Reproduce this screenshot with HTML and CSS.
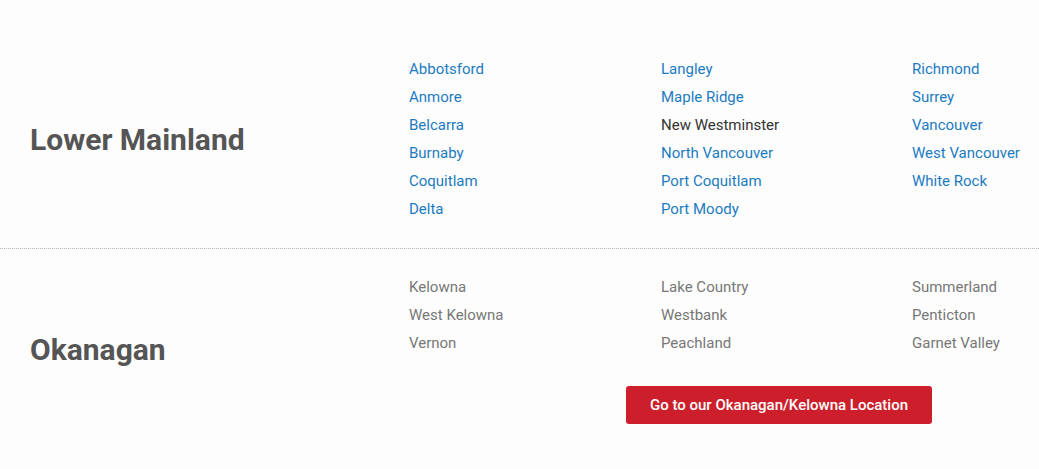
FILE: index.html
```html
<!DOCTYPE html>
<html lang="en">
<head>
<meta charset="utf-8">
<title>Service Areas</title>
<link rel="stylesheet" href="styles.css">
</head>
<body>
<div class="page">
  <section class="region region-first">
    <div class="region-title"><h2>Lower Mainland</h2></div>
    <div class="region-body">
      <ul class="cities">
        <li><a href="#">Abbotsford</a></li>
        <li><a href="#">Langley</a></li>
        <li><a href="#">Richmond</a></li>
        <li><a href="#">Anmore</a></li>
        <li><a href="#">Maple Ridge</a></li>
        <li><a href="#">Surrey</a></li>
        <li><a href="#">Belcarra</a></li>
        <li><span class="plain">New Westminster</span></li>
        <li><a href="#">Vancouver</a></li>
        <li><a href="#">Burnaby</a></li>
        <li><a href="#">North Vancouver</a></li>
        <li><a href="#">West Vancouver</a></li>
        <li><a href="#">Coquitlam</a></li>
        <li><a href="#">Port Coquitlam</a></li>
        <li><a href="#">White Rock</a></li>
        <li><a href="#">Delta</a></li>
        <li><a href="#">Port Moody</a></li>
        <li></li>
      </ul>
    </div>
  </section>
  <section class="region">
    <div class="region-title"><h2>Okanagan</h2></div>
    <div class="region-body">
      <ul class="cities muted">
        <li>Kelowna</li>
        <li>Lake Country</li>
        <li>Summerland</li>
        <li>West Kelowna</li>
        <li>Westbank</li>
        <li>Penticton</li>
        <li>Vernon</li>
        <li>Peachland</li>
        <li>Garnet Valley</li>
      </ul>
      <div class="cta-wrap"><a class="cta" href="#">Go to our Okanagan/Kelowna Location</a></div>
    </div>
  </section>
</div>
</body>
</html>
```

FILE: styles.css
```css
html, body {
  margin: 0;
  padding: 0;
  background: #fdfdfd;
}
body {
  font-family: Roboto, "Liberation Sans", Arial, sans-serif;
  color: #555;
}
.page {
  padding-top: 30px;
}
.region {
  display: flex;
  align-items: center;
  padding: 24px 0 26px;
}
.region-first {
  padding: 25px 0 25px;
  border-bottom: 1px dotted #b5b5b5;
}
.region-title {
  width: 379px;
  padding: 2px 0 0 30px;
  flex: none;
}
.region-title h2 {
  margin: 0;
  font-size: 30px;
  line-height: 36px;
  font-weight: 700;
  color: #555;
}
.region-body {
  flex: 1;
  min-width: 0;
}
.cities {
  list-style: none;
  margin: 0;
  padding: 0;
  display: grid;
  grid-template-columns: 252px 251px auto;
  font-size: 15px;
  line-height: 28px;
}
.cities a {
  color: #1b7bc2;
  text-decoration: none;
}
.cities .plain {
  color: #333;
}
.cities.muted {
  color: #777;
}
.cta-wrap {
  margin-top: 29px;
  padding-left: 217px;
}
.cta {
  display: inline-block;
  width: 306px;
  box-sizing: border-box;
  text-align: center;
  background: #cd1f2b;
  color: #fff;
  font-size: 15px;
  font-weight: 500;
  line-height: 38px;
  border-radius: 3px;
  text-decoration: none;
}
```
